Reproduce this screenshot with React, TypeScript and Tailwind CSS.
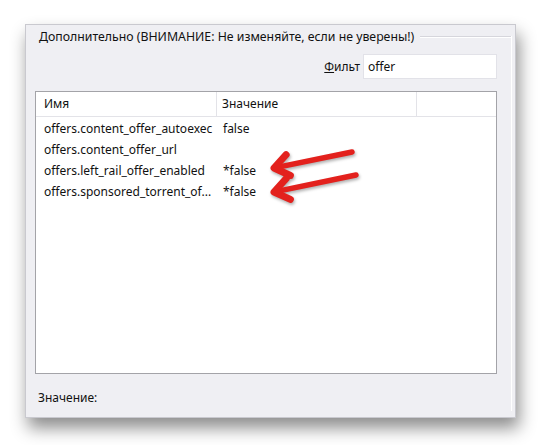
import React from "react";

const rows = [
  { name: "offers.content_offer_autoexec", value: "false" },
  { name: "offers.content_offer_url", value: "" },
  { name: "offers.left_rail_offer_enabled", value: "*false" },
  { name: "offers.sponsored_torrent_of...", value: "*false" },
];

function Arrow({ x1, y1, x2, y2 }: { x1: number; y1: number; x2: number; y2: number }) {
  const dx = x1 - x2;
  const dy = y1 - y2;
  const len = Math.sqrt(dx * dx + dy * dy);
  const ux = dx / len;
  const uy = dy / len;
  const ang = (36 * Math.PI) / 180;
  const arm = 18;
  const rot = (a: number) => ({
    x: x2 + arm * (ux * Math.cos(a) - uy * Math.sin(a)),
    y: y2 + arm * (ux * Math.sin(a) + uy * Math.cos(a)),
  });
  const a1 = rot(ang);
  const a2 = rot(-ang);
  return (
    <g>
      <line x1={x1} y1={y1} x2={x2 + ux * 3} y2={y2 + uy * 3} stroke="#e3211d" strokeWidth={5.5} strokeLinecap="round" />
      <polyline
        points={`${a1.x},${a1.y} ${x2},${y2} ${a2.x},${a2.y}`}
        fill="none"
        stroke="#e3211d"
        strokeWidth={7}
        strokeLinecap="round"
        strokeLinejoin="round"
      />
    </g>
  );
}

export default function App() {
  return (
    <div
      className="relative w-[542px] h-[445px] bg-white overflow-hidden text-[12px] text-[#111]"
      style={{ fontFamily: '"Noto Sans", "Open Sans", sans-serif' }}
    >
      <div className="pt-[24px] pl-[25px]">
        <div className="w-[491px] h-[394px] bg-[#efeff3] border border-[#c9c9cf] shadow-[3px_10px_16px_rgba(0,0,0,0.45)] flex flex-col">
          <div className="flex items-center h-[18px] mt-[3px] pl-[13px] pr-[3px]">
            <span className="leading-none whitespace-nowrap text-[12.3px]">
              Дополнительно (ВНИМАНИЕ: Не изменяйте, если не уверены!)
            </span>
            <div className="flex-1 ml-[6px] border-t border-[#d6d6dc] border-b border-b-white" />
          </div>
          <div className="flex flex-1 pr-[3px]">
            <div className="flex-1 flex flex-col">
              <div className="flex justify-end items-center mt-[8px] pr-[14px]">
                <span className="mr-[3px]">
                  <span className="underline">Ф</span>ильт
                </span>
                <div className="w-[134px] h-[25px] bg-white border border-[#e2e2e8] flex items-center pl-[4px]">
                  offer
                </div>
              </div>
              <div className="ml-[9px] mr-[14px] mt-[12px] h-[283px] bg-white border border-[#a3a3a8] flex flex-col">
                <div className="flex h-[25px] border-b border-[#e3e3e8] items-center">
                  <div className="w-[181px] h-full border-r border-[#e3e3e8] pl-[8px] flex items-center">Имя</div>
                  <div className="w-[200px] h-full border-r border-[#e3e3e8] pl-[5px] flex items-center">Значение</div>
                  <div className="flex-1" />
                </div>
                <div className="pt-[1px]">
                  {rows.map((r) => (
                    <div key={r.name} className="flex h-[21px] items-center">
                      <div className="w-[181px] pl-[8px] whitespace-nowrap overflow-hidden">{r.name}</div>
                      <div className="pl-[6px]">{r.value}</div>
                    </div>
                  ))}
                </div>
              </div>
              <div className="pl-[12px] mt-[15px]">Значение:</div>
            </div>
            <div className="w-0 border-l border-white mt-[-10px] mb-[6px]" />
          </div>
        </div>
      </div>
      <svg
        className="absolute left-0 top-0 pointer-events-none"
        width={542}
        height={445}
        style={{ filter: "drop-shadow(1px 2px 1.5px rgba(0,0,0,0.3))" }}
      >
        <Arrow x1={352} y1={152} x2={274} y2={168} />
        <Arrow x1={356} y1={175} x2={274} y2={192} />
      </svg>
    </div>
  );
}
